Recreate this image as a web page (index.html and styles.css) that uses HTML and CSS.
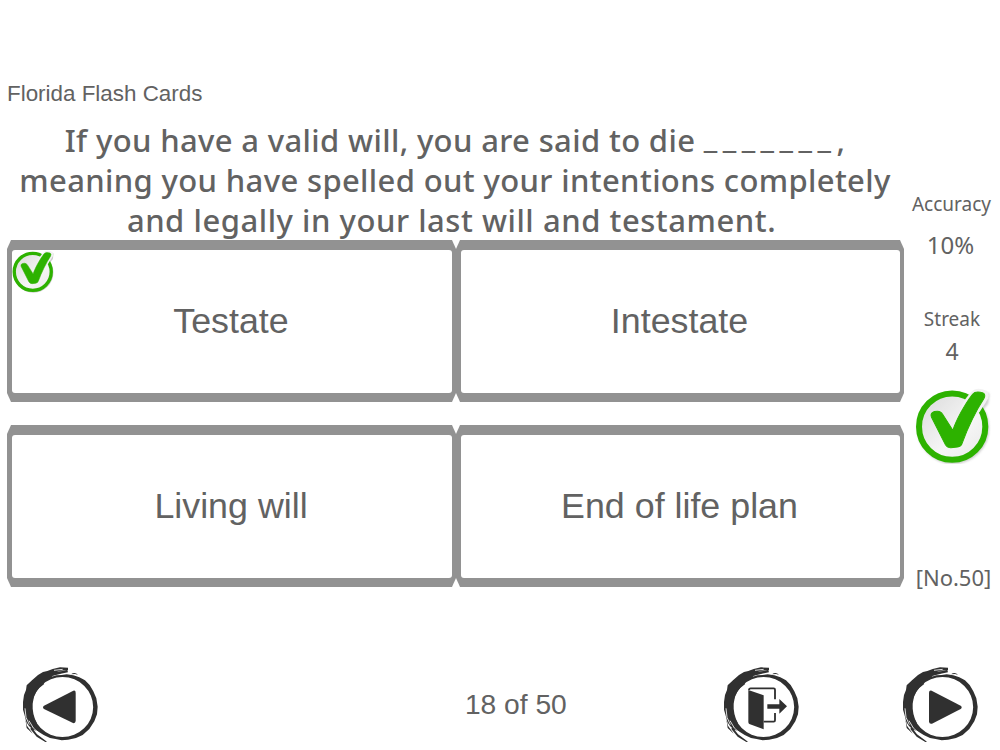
FILE: index.html
```html
<!DOCTYPE html>
<html lang="en">
<head>
<meta charset="utf-8">
<title>Florida Flash Cards</title>
<link rel="stylesheet" href="styles.css">
</head>
<body>
<svg class="defs" width="0" height="0">
  <defs>
    <linearGradient id="disc" x1="0" y1="0" x2="1" y2="1">
      <stop offset="0" stop-color="#d9d9d9"/><stop offset="0.6" stop-color="#f6f6f6"/><stop offset="1" stop-color="#e8e8e8"/>
    </linearGradient>
    <filter id="soft" x="-20%" y="-20%" width="140%" height="140%"><feGaussianBlur stdDeviation="3"/></filter>
    <symbol id="check" viewBox="30 24 230 226">
      <g fill="none" stroke="#aaa" opacity=".6" filter="url(#soft)">
        <circle cx="144" cy="143" r="99" stroke-width="17"/>
        <path d="M218 38 L247 43 L244 68 L224 92" stroke-width="10" stroke-linejoin="round"/>
      </g>
      <circle cx="141" cy="139" r="99" fill="url(#disc)" stroke="#2db200" stroke-width="18"/>
      <path d="M174 66 C186 48 198 32 210 27 Q224 23 244 32 Q253 38 249 54 L224 94 L200 120 L160 110 Z" fill="#f2f2f2"/>
      <path d="M79 110 C75 98 84 93 97 93 Q108 93 113 103 L143 150 C152 122 178 72 202 42 Q211 31 233 38 Q242 43 236 55 C212 92 188 142 171 188 Q168 198 157 200 L137 202 Q127 202 121 193 Z" fill="#2db200" stroke="#2db200" stroke-width="3"/>
    </symbol>
    <symbol id="ring" viewBox="0 0 300 285">
      <path fill="#303030" fill-rule="evenodd" d="M174 38 L150 37 L128 42 L112 48 L99 51 L84 60 L66 76 L50 91 L48 105 L42 120 L39 141 L39 164 L43 178 L49 201 L57 213 L69 224 L82 228 L101 240 L120 249 L137 252 L155 256 L174 254 L198 249 L218 240 L238 222 L253 199 L261 178 L263 155 L259 130 L250 109 L239 90 L225 76 L208 67 L190 61 L170 58 L155 60 L139 61 L125 65 L134 58 L158 52 L171 50 L140 49 L174 45 Z M158 66 A92 90 0 1 1 157 246 A92 90 0 1 1 158 66 Z"/>
      <path fill="#303030" d="M183 58 Q194 49 204 59 L195 57 Z M46 192 L51 212 L64 230 L68 236 L50 219 Z M64 216 L81 238 L111 260 L106 261 L80 245 L61 222 Z"/>
      <path fill="none" stroke="#303030" stroke-width="7" d="M128 59 L155 52 L173 48"/>
      <path fill="none" stroke="#303030" stroke-width="10" d="M100 83 Q66 105 63 145 Q61 180 77 208"/>
      <path fill="none" stroke="#fff" stroke-width="2.5" d="M45 160 L48 187 L58 209 M57 197 L70 219 L89 236 M132 46 L158 43"/>
    </symbol>
  </defs>
</svg>
<main class="app">
  <section class="quiz">
    <h1 class="deck">Florida Flash Cards</h1>
    <div class="question">
      <div class="l1">If you have a valid will, you are said to die <span class="blank">_______</span>,</div>
      <div class="l2">meaning you have spelled out your intentions completely</div>
      <div class="l3">and legally in your last will and testament.</div>
    </div>
    <div class="answers">
      <div class="card"><div class="face">Testate<svg class="mark"><use href="#check"/></svg></div></div>
      <div class="card"><div class="face">Intestate</div></div>
      <div class="card"><div class="face">Living will</div></div>
      <div class="card"><div class="face">End of life plan</div></div>
    </div>
  </section>
  <aside class="stats">
    <div class="label accuracy">Accuracy</div>
    <div class="value percent">10%</div>
    <div class="label streak">Streak</div>
    <div class="value count">4</div>
    <svg class="result"><use href="#check"/></svg>
    <div class="number">[No.50]</div>
  </aside>
  <footer class="nav">
    <svg class="btn" viewBox="0 0 300 285"><use href="#ring" width="300" height="285"/><path d="M190 107 L102 152 Q96 157 102 162 L189 204 Q196 206 197 198 V113 Q197 105 190 107 Z" fill="#303030"/></svg>
    <div class="progress">18 of 50</div>
    <svg class="btn exit" viewBox="0 0 300 285"><use href="#ring" width="300" height="285"/><path d="M112 105 L158 121 V223 L115 207 Q112 206 112 201 Z M169 148 H205 V132 L228 154 L205 176 V161 H169 Z" fill="#303030"/><path d="M114 105 Q114 100 119 100 H188 Q192 100 192 104 V133 M192 174 V196 Q192 200 188 200 H158" fill="none" stroke="#303030" stroke-width="5.5"/></svg>
    <svg class="btn next" viewBox="0 0 300 285"><use href="#ring" width="300" height="285"/><path d="M125 107 L212 152 Q218 157 212 162 L126 206 Q118 208 117 200 V113 Q117 105 125 107 Z" fill="#303030"/></svg>
  </footer>
</main>
</body>
</html>
```
FILE: styles.css
```css
* { box-sizing: border-box; }
body { margin: 0; background: #fff; color: #626262; font-family: "Liberation Sans", Arial, sans-serif; }
.defs { position: absolute; }
.app { width: 1000px; height: 750px; overflow: hidden; display: grid; grid-template: 655px 95px / 904px 96px; }
.quiz { padding: 81px 0 0 7px; }
.deck { margin: 0; font-size: 22.4px; line-height: 26px; height: 38.5px; font-weight: 400; white-space: nowrap; }
.question { height: 120.5px; width: 897px; font: 500 31px/40.3px "Noto Sans", sans-serif; text-align: center; white-space: nowrap; }
.blank { letter-spacing: 5.5px; vertical-align: 4px; line-height: 0; }
.l1, .l2, .l3 { width: 896px; letter-spacing: 0.36px; }
.l3 { width: 889px; letter-spacing: 0.54px; }
.answers { display: grid; grid-template-columns: 449px 448px; grid-template-rows: 162px 162px; row-gap: 23px; }
.card { padding: 9.5px 4.5px; background: #929292; clip-path: polygon(4px 0, calc(100% - 4px) 0, 100% 9px, 100% calc(100% - 9px), calc(100% - 4px) 100%, 4px 100%, 0 calc(100% - 9px), 0 9px); }
.face { position: relative; height: 100%; display: flex; align-items: center; justify-content: center; padding: 1px 1px 0 0; background: #fff; border-radius: 3px; font-size: 35.8px; }
.mark { position: absolute; left: 0; top: 0; width: 43px; height: 43px; }
.stats { display: flex; flex-direction: column; align-items: center; padding-top: 190px; font-family: "Noto Sans", sans-serif; white-space: nowrap; }
.label { font-size: 19px; line-height: 28px; }
.value { font-size: 23px; line-height: 30px; }
.accuracy { margin-right: 1px; }
.percent { margin-top: 12px; margin-right: 3px; font-size: 24px; }
.streak { margin-top: 45px; }
.count { margin-top: 3px; }
.result { width: 77px; height: 76px; margin: 22px 0 0 3px; }
.number { margin-top: 98px; margin-left: 3px; font-size: 22px; line-height: 30px; }
.nav { grid-column: 1 / 3; display: flex; padding-left: 10px; }
.btn { flex: none; width: 100px; height: 95px; }
.progress { width: 600.7px; padding: 33px 0 0 211px; text-align: center; font-size: 28.2px; line-height: 32px; }
.next { margin-left: 79.3px; }
```
